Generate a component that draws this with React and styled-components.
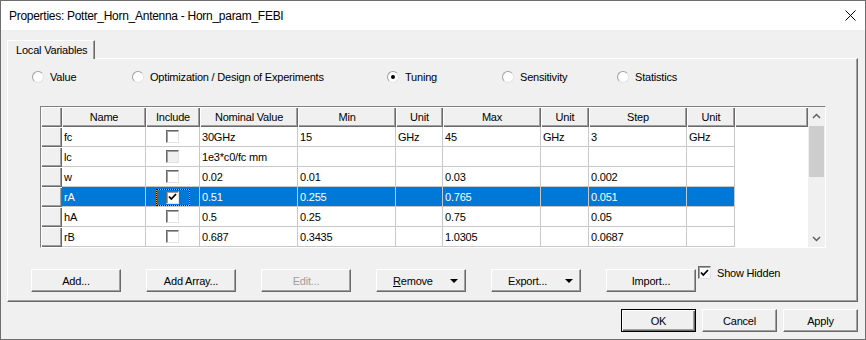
import React from 'react';
import styled, { createGlobalStyle } from 'styled-components';

const Global = createGlobalStyle`
  html, body { margin: 0; padding: 0; background: #f0f0f0; }
  body { font-family: "Liberation Sans", Arial, sans-serif; }
  * { box-sizing: border-box; }
`;

const Window = styled.div`
  width: 866px;
  height: 340px;
  border: 1px solid #6f6f6f;
  background: #f0f0f0;
  font-size: 11px;
  letter-spacing: -0.2px;
  color: #000;
  display: flex;
  flex-direction: column;
  overflow: hidden;
`;

const TitleBar = styled.div`
  height: 29px;
  flex: none;
  background: #fff;
  display: flex;
  align-items: center;
  justify-content: space-between;
  padding: 0 9px 0 8px;
  font-size: 12px;
  letter-spacing: -0.28px;
`;

const CloseIcon = () => (
  <svg width="11" height="11" viewBox="0 0 11 11">
    <path d="M0.5 0.5 L10.5 10.5 M10.5 0.5 L0.5 10.5" stroke="#000" strokeWidth="1" fill="none" />
  </svg>
);

const Body = styled.div`
  flex: 1;
  display: flex;
  flex-direction: column;
  padding: 10px 7px 0 6px;
`;

const TabStrip = styled.div`
  display: flex;
  height: 18px;
`;

const Tab = styled.div`
  position: relative;
  z-index: 1;
  width: 88px;
  height: 19px;
  margin-bottom: -1px;
  padding-left: 8px;
  display: flex;
  align-items: center;
  background: #f0f0f0;
  border-top: 1px solid #fff;
  border-left: 1px solid #fff;
  border-right: 1px solid #696969;
  box-shadow: inset -1px 0 #a0a0a0;
`;

const Panel = styled.div`
  height: 244px;
  display: flex;
  flex-direction: column;
  border: 1px solid;
  border-color: #fff #696969 #696969 #fff;
  box-shadow: inset -1px -1px #a0a0a0;
`;

const RadioRow = styled.div`
  display: grid;
  grid-template-columns: 100px 255px 115px 115px auto;
  align-items: center;
  height: 20px;
  margin: 8px 0 0 24px;
`;

const RadioItem = styled.label`
  display: flex;
  align-items: center;
  gap: 6px;
`;

const RadioCircle = styled.span`
  width: 12px;
  height: 12px;
  border-radius: 50%;
  border: 1px solid #a0a0a0;
  border-right-color: #e3e3e3;
  border-bottom-color: #e3e3e3;
  background: #fff;
  display: flex;
  align-items: center;
  justify-content: center;
  &::after {
    content: '';
    width: 4px;
    height: 4px;
    border-radius: 50%;
    background: ${p => (p.$on ? '#000' : 'transparent')};
  }
`;

const TableBox = styled.div`
  width: 786px;
  height: 142px;
  margin: 19px 0 0 32px;
  border: 1px solid;
  border-color: #828282 #fff #fff #828282;
  display: flex;
`;

const GridArea = styled.div`
  width: 767px;
  background: #fff;
  display: flex;
  flex-direction: column;
`;

const Row = styled.div`
  display: flex;
  height: 20px;
`;

const raised = `
  background: #f0f0f0;
  box-shadow: inset 1px 1px #fff, inset -1px -1px #696969, inset -2px -2px #a0a0a0;
`;

const HeadCell = styled.div`
  ${raised}
  width: ${p => p.$w}px;
  height: 20px;
  display: flex;
  align-items: center;
  justify-content: center;
  padding-bottom: 1px;
`;

const RowHead = styled.div`
  ${raised}
  width: 21px;
  height: 20px;
`;

const Cell = styled.div`
  width: ${p => p.$w}px;
  height: 20px;
  border-right: 1px solid #c8c8c8;
  border-bottom: 1px solid #c8c8c8;
  background: ${p => (p.$sel ? '#0078d7' : '#fff')};
  color: ${p => (p.$sel ? '#fff' : '#000')};
  display: flex;
  align-items: center;
  justify-content: ${p => (p.$center ? 'center' : 'flex-start')};
  padding-left: ${p => (p.$center ? 0 : 2)}px;
  white-space: nowrap;
`;

const Box = styled.span`
  width: 13px;
  height: 13px;
  border: 1px solid;
  border-color: #696969 #e3e3e3 #e3e3e3 #696969;
  box-shadow: inset 1px 1px #a0a0a0;
  background: ${p => (p.$disabled ? '#f0f0f0' : '#fff')};
  display: flex;
  align-items: center;
  justify-content: center;
`;

const FocusBox = styled.span`
  width: 34px;
  height: 17px;
  margin-top: 1px;
  border: 1px dotted #000;
  background: #f6a341;
  box-shadow: inset 0 0 0 40px #0078d7;
  display: flex;
  align-items: center;
  justify-content: center;
`;

const Check = () => (
  <svg width="9" height="8" viewBox="0 0 9 8">
    <path d="M1 3.5 L3.3 6 L8 1" stroke="#000" strokeWidth="1.8" fill="none" />
  </svg>
);

const Scrollbar = styled.div`
  width: 17px;
  background: #f0f0f0;
  display: flex;
  flex-direction: column;
`;

const ArrowBtn = styled.div`
  height: 17px;
  flex: none;
  display: flex;
  align-items: center;
  justify-content: center;
`;

const Track = styled.div`
  flex: 1;
  display: flex;
  flex-direction: column;
`;

const Thumb = styled.div`
  height: 51px;
  margin: 2px 1px 0 1px;
  background: #cdcdcd;
`;

const Chevron = ({ down }) => (
  <svg width="9" height="6" viewBox="0 0 9 6">
    <path d={down ? 'M1 1 L4.5 4.5 L8 1' : 'M1 5 L4.5 1.5 L8 5'} stroke="#606060" strokeWidth="1.5" fill="none" />
  </svg>
);

const ButtonRow = styled.div`
  display: flex;
  align-items: flex-start;
  gap: 25px;
  margin: 18px 0 0 23px;
`;

const Button = styled.div`
  width: ${p => p.$w}px;
  height: 23px;
  margin-top: ${p => p.$mt || 0}px;
  background: #f0f0f0;
  color: ${p => (p.$disabled ? '#a0a0a0' : '#000')};
  border: 1px solid;
  border-color: ${p => (p.$default ? '#000' : '#fff #696969 #696969 #fff')};
  box-shadow: ${p =>
    p.$default
      ? 'inset 1px 1px #fff, inset -1px -1px #696969, inset -2px -2px #a0a0a0'
      : 'inset -1px -1px #a0a0a0'};
  display: flex;
  align-items: center;
  justify-content: ${p => (p.$drop ? 'space-between' : 'center')};
  padding: ${p => (p.$drop ? '0 7px 0 16px' : '0')};
`;

const Triangle = styled.span`
  width: 0;
  height: 0;
  border-left: 4px solid transparent;
  border-right: 4px solid transparent;
  border-top: 4px solid #000;
`;

const CheckLabel = styled.label`
  display: flex;
  align-items: center;
  gap: 6px;
  margin-left: -23px;
`;

const Footer = styled.div`
  display: flex;
  justify-content: flex-end;
  gap: 6px;
  margin-top: 7px;
`;

const columns = [
  { key: 'name', label: 'Name', w: 84 },
  { key: 'inc', label: 'Include', w: 54 },
  { key: 'nom', label: 'Nominal Value', w: 98 },
  { key: 'min', label: 'Min', w: 98 },
  { key: 'u1', label: 'Unit', w: 47 },
  { key: 'max', label: 'Max', w: 98 },
  { key: 'u2', label: 'Unit', w: 48 },
  { key: 'step', label: 'Step', w: 98 },
  { key: 'u3', label: 'Unit', w: 48 },
];

const rows = [
  { name: 'fc', nom: '30GHz', min: '15', u1: 'GHz', max: '45', u2: 'GHz', step: '3', u3: 'GHz' },
  { name: 'lc', disabled: true, nom: '1e3*c0/fc mm' },
  { name: 'w', nom: '0.02', min: '0.01', max: '0.03', step: '0.002' },
  { name: 'rA', sel: true, checked: true, nom: '0.51', min: '0.255', max: '0.765', step: '0.051' },
  { name: 'hA', nom: '0.5', min: '0.25', max: '0.75', step: '0.05' },
  { name: 'rB', nom: '0.687', min: '0.3435', max: '1.0305', step: '0.0687' },
];

const radios = [
  { label: 'Value' },
  { label: 'Optimization / Design of Experiments' },
  { label: 'Tuning', on: true },
  { label: 'Sensitivity' },
  { label: 'Statistics' },
];

function IncludeBox({ row }) {
  if (row.sel) {
    return (
      <FocusBox>
        <Box>{row.checked && <Check />}</Box>
      </FocusBox>
    );
  }
  return <Box $disabled={row.disabled}>{row.checked && <Check />}</Box>;
}

export default function App() {
  return (
    <>
      <Global />
      <Window>
        <TitleBar>
          <span>Properties: Potter_Horn_Antenna - Horn_param_FEBI</span>
          <CloseIcon />
        </TitleBar>
        <Body>
          <TabStrip>
            <Tab>Local Variables</Tab>
          </TabStrip>
          <Panel>
            <RadioRow>
              {radios.map(r => (
                <RadioItem key={r.label}>
                  <RadioCircle $on={r.on} />
                  <span>{r.label}</span>
                </RadioItem>
              ))}
            </RadioRow>
            <TableBox>
              <GridArea>
                <Row>
                  <RowHead />
                  {columns.map(c => (
                    <HeadCell key={c.key} $w={c.w}>{c.label}</HeadCell>
                  ))}
                  <HeadCell $w={73} />
                </Row>
                {rows.map(r => (
                  <Row key={r.name}>
                    <RowHead />
                    {columns.map(c => (
                      <Cell key={c.key} $w={c.w} $sel={r.sel} $center={c.key === 'inc'}>
                        {c.key === 'inc' ? <IncludeBox row={r} /> : r[c.key] || ''}
                      </Cell>
                    ))}
                  </Row>
                ))}
              </GridArea>
              <Scrollbar>
                <ArrowBtn><Chevron /></ArrowBtn>
                <Track><Thumb /></Track>
                <ArrowBtn><Chevron down /></ArrowBtn>
              </Scrollbar>
            </TableBox>
            <ButtonRow>
              <Button $w={90} $mt={3}>Add...</Button>
              <Button $w={90} $mt={3}>Add Array...</Button>
              <Button $w={90} $mt={3} $disabled>Edit...</Button>
              <Button $w={90} $mt={3} $drop>
                <span><u>R</u>emove</span>
                <Triangle />
              </Button>
              <Button $w={90} $mt={3} $drop>
                <span>Export...</span>
                <Triangle />
              </Button>
              <Button $w={90} $mt={3}>Import...</Button>
              <CheckLabel>
                <Box><Check /></Box>
                <span>Show Hidden</span>
              </CheckLabel>
            </ButtonRow>
          </Panel>
          <Footer>
            <Button $w={75} $default>OK</Button>
            <Button $w={75}>Cancel</Button>
            <Button $w={75}>Apply</Button>
          </Footer>
        </Body>
      </Window>
    </>
  );
}
